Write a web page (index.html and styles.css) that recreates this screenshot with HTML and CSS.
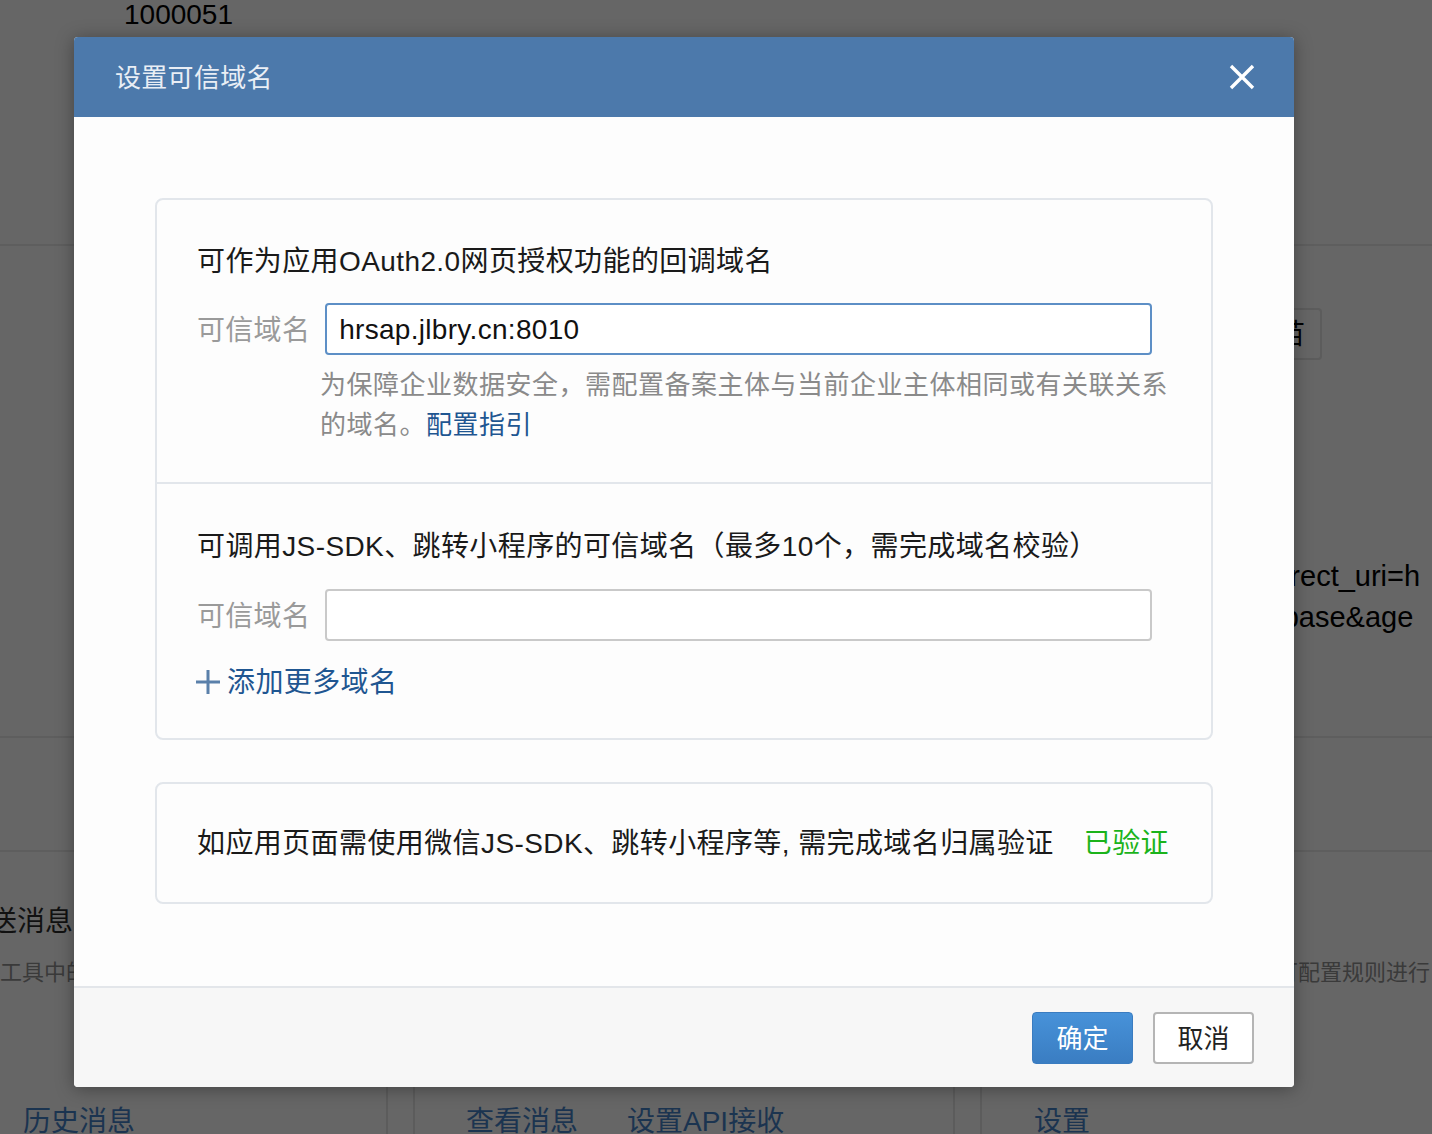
FILE: index.html
```html
<!DOCTYPE html>
<html lang="zh-CN">
<head>
<meta charset="utf-8">
<title>设置可信域名</title>
<link rel="stylesheet" href="styles.css">
</head>
<body>
<div class="page">
  <div class="bg-head"><span class="bg-id">1000051</span></div>
  <div class="bg-main">
    <div class="bg-side">
      <span class="bg-btn">指苗</span>
      <div class="bg-uri">
        <div class="bg-uri-line">redirect_uri=h</div>
        <div class="bg-uri-line l2">pi_base&amp;age</div>
      </div>
    </div>
  </div>
  <div class="bg-band"></div>
  <div class="bg-cards">
    <div class="bg-card c1">
      <div class="bg-title t1">发送消息</div>
      <div class="bg-desc d1">在工具中的应用内发送消息</div>
      <div class="bg-links"><span>历史消息</span></div>
    </div>
    <div class="bg-card c2">
      <div class="bg-title">接收消息</div>
      <div class="bg-desc">接收用户消息</div>
      <div class="bg-links"><span>查看消息</span><span>设置API接收</span></div>
    </div>
    <div class="bg-card c3">
      <div class="bg-title">自动回复</div>
      <div class="bg-desc">在企业微信中接收消息，可配置规则进行自动回复</div>
      <div class="bg-links"><span>设置</span></div>
    </div>
  </div>

  <div class="dialog">
    <div class="dlg-head">
      <span class="dlg-title">设置可信域名</span>
      <svg class="dlg-close" width="26" height="26" viewBox="0 0 26 26"><path d="M2 2 L24 24 M24 2 L2 24" stroke="#fff" stroke-width="3.4" fill="none"/></svg>
    </div>
    <div class="dlg-body">
      <div class="card">
        <div class="sec sec-a">
          <div class="sec-title">可作为应用OAuth2.0网页授权功能的回调域名</div>
          <div class="field">
            <span class="field-label">可信域名</span>
            <input class="field-input focus" type="text" value="hrsap.jlbry.cn:8010">
          </div>
          <div class="hint">为保障企业数据安全，需配置备案主体与当前企业主体相同或有关联关系的域名。<a class="link">配置指引</a></div>
        </div>
        <div class="sec sec-b">
          <div class="sec-title">可调用JS-SDK、跳转小程序的可信域名（最多10个，需完成域名校验）</div>
          <div class="field">
            <span class="field-label">可信域名</span>
            <input class="field-input" type="text" value="">
          </div>
          <div class="add-more">
            <svg width="24" height="24" viewBox="0 0 24 24"><path d="M12 0 V24 M0 12 H24" stroke="#5a80aa" stroke-width="3" fill="none"/></svg>
            <span>添加更多域名</span>
          </div>
        </div>
      </div>
      <div class="card card-verify">
        <span class="verify-text">如应用页面需使用微信JS-SDK、跳转小程序等, 需完成域名归属验证</span>
        <span class="verified">已验证</span>
      </div>
    </div>
    <div class="dlg-foot">
      <button class="btn btn-primary">确定</button>
      <button class="btn btn-default">取消</button>
    </div>
  </div>
</div>
</body>
</html>
```

FILE: styles.css
```css
* { box-sizing: border-box; }
html, body { margin: 0; padding: 0; }
body {
  background: #666666;
  font-family: "Liberation Sans", "Noto Sans CJK SC", sans-serif;
}
.page {
  position: relative;
  width: 1432px;
  height: 1134px;
  overflow: hidden;
  background: #666666;
}

/* ---------- background page (dimmed) ---------- */
.bg-head {
  height: 246px;
  padding: 1px 0 0 124px;
  border-bottom: 2px solid #5e5e5e;
}
.bg-id {
  display: block;
  font-size: 28px;
  line-height: 28px;
  color: #000;
}
.bg-main {
  height: 492px;
  border-bottom: 2px solid #5e5e5e;
  display: flex;
}
.bg-side {
  margin-left: 1230px;
  width: 202px;
  padding-top: 62px;
}
.bg-btn {
  display: block;
  width: 92px;
  height: 52px;
  border: 2px solid #5c5c5c;
  border-radius: 4px;
  text-align: right;
  padding-right: 15px;
  font-size: 28px;
  line-height: 50px;
  color: #000;
  white-space: nowrap;
  overflow: hidden;
}
.bg-uri {
  margin-top: 196px;
  padding-left: 12px;
}
.bg-uri-line {
  font-size: 29px;
  line-height: 41px;
  color: #000;
  white-space: nowrap;
}
.bg-uri-line.l2 { margin-left: 2px; }
.bg-band {
  height: 114px;
  border-bottom: 2px solid #5e5e5e;
}
.bg-cards {
  display: grid;
  grid-template-columns: 388px 542px 1fr;
  column-gap: 25px;
  height: 400px;
}
.bg-card {
  padding-top: 50px;
  white-space: nowrap;
}
.bg-card.c1 { border-right: 2px solid #5c5c5c; padding-left: 23px; }
.bg-card.c2 { border-left: 2px solid #5c5c5c; border-right: 2px solid #5c5c5c; padding-left: 51px; }
.bg-card.c3 { border-left: 2px solid #5c5c5c; padding-left: 52px; }
.bg-title {
  font-size: 28px;
  line-height: 40px;
  color: #111;
}
.bg-title.t1 { margin-left: -62px; }
.bg-desc {
  margin-top: 15px;
  font-size: 22px;
  line-height: 32px;
  color: #3a3a3a;
}
.bg-desc.d1 { margin-left: -45px; }
.bg-links {
  margin-top: 113px;
  display: flex;
  gap: 49px;
  font-size: 28px;
  line-height: 40px;
  color: #1b3450;
}

/* ---------- dialog ---------- */
.dialog {
  position: absolute;
  left: 74px;
  top: 37px;
  width: 1220px;
  height: 1050px;
  display: flex;
  flex-direction: column;
  background: #fdfdfd;
  border-radius: 4px;
  overflow: hidden;
  box-shadow: 0 2px 18px rgba(0, 0, 0, 0.35);
}
.dlg-head {
  height: 80px;
  flex: none;
  background: #4c79ab;
  display: flex;
  align-items: center;
  justify-content: space-between;
  padding: 0 39px 0 41px;
}
.dlg-title {
  font-size: 26px;
  line-height: 40px;
  padding-top: 2px;
  color: #e9eef5;
  letter-spacing: 0.3px;
}
.dlg-close { display: block; }
.dlg-body {
  flex: 1;
  padding: 81px 81px 0 81px;
}
.card {
  border: 2px solid #e2e6eb;
  border-radius: 8px;
}
.sec { padding-left: 40px; padding-right: 59px; }
.sec-a {
  padding-top: 42px;
  padding-bottom: 37px;
  border-bottom: 2px solid #e2e6eb;
}
.sec-b {
  padding-top: 43px;
  padding-bottom: 35px;
}
.sec-title {
  font-size: 28px;
  line-height: 40px;
  color: #1a1a1a;
  letter-spacing: 0.4px;
  white-space: nowrap;
}
.field {
  display: flex;
  align-items: center;
  gap: 15px;
}
.sec-a .field { margin-top: 21px; }
.sec-b .field { margin-top: 22px; }
.field-label {
  font-size: 28px;
  line-height: 40px;
  padding-top: 3px;
  color: #9a9a9a;
  letter-spacing: 0.3px;
  white-space: nowrap;
}
.field-input {
  width: 828px;
  height: 52px;
  border: 2px solid #c9c9c9;
  border-radius: 4px;
  background: #fff;
  padding: 2px 12px 0;
  font-family: "Liberation Sans", "Noto Sans CJK SC", sans-serif;
  font-size: 28px;
  letter-spacing: 0.3px;
  color: #111;
  outline: none;
}
.field-input.focus { border-color: #5d8fc6; }
.hint {
  margin-top: 10px;
  margin-left: 123px;
  width: 860px;
  font-size: 26px;
  line-height: 40px;
  letter-spacing: 0.5px;
  color: #8a8a8a;
}
.link { color: #1f5691; text-decoration: none; }
.add-more {
  margin-top: 20px;
  display: flex;
  align-items: center;
  gap: 7px;
  margin-left: -1px;
  font-size: 28px;
  line-height: 40px;
  letter-spacing: 0.4px;
  color: #1f5691;
}
.add-more span { padding-top: 2px; }
.add-more svg { display: block; }
.card-verify {
  margin-top: 42px;
  padding: 40px 40px 38px;
  display: flex;
  align-items: center;
  white-space: nowrap;
}
.verify-text {
  font-size: 28px;
  line-height: 40px;
  letter-spacing: 0.4px;
  color: #1a1a1a;
}
.verified {
  margin-left: 30px;
  font-size: 28px;
  line-height: 40px;
  letter-spacing: 0.4px;
  color: #1bb31b;
}
.dlg-foot {
  height: 101px;
  flex: none;
  border-top: 2px solid #e3e6ea;
  background: #f7f7f7;
  display: flex;
  align-items: center;
  justify-content: flex-end;
  gap: 20px;
  padding-right: 40px;
}
.btn {
  width: 101px;
  height: 52px;
  border-radius: 4px;
  font-family: "Liberation Sans", "Noto Sans CJK SC", sans-serif;
  font-size: 26px;
  padding: 0 0 3px;
  cursor: pointer;
}
.btn-primary {
  background: linear-gradient(#4792d9, #3a7dc2);
  border: 1px solid #3a7cc0;
  color: #fff;
}
.btn-default {
  background: #fff;
  border: 2px solid #b5b5b5;
  color: #222;
}
```
